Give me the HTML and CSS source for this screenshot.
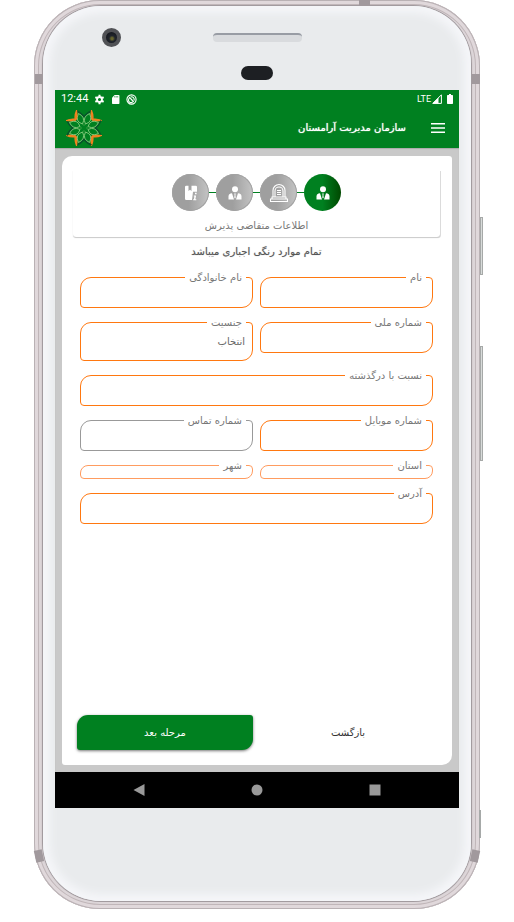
FILE: index.html
```html
<!DOCTYPE html>
<html lang="fa" dir="rtl">
<head>
<meta charset="utf-8">
<meta name="viewport" content="width=device-width, initial-scale=1">
<title>سازمان مدیریت آرامستان</title>
<link rel="stylesheet" href="styles.css">
</head>
<body>
<svg class="defs" aria-hidden="true">
  <symbol id="person" viewBox="0 0 16 16">
    <circle cx="8" cy="4.300" r="3"/>
    <path d="M1.500 14.500V11q0-2 2-2.500l1.500-.3L7 14.500zM14.500 14.500V11q0-2-2-2.500l-1.500-.3L9 14.500z"/>
    <path d="M7.200 8.500h1.600l-.4 1.500.3 2.500-.7 1-.7-1 .3-2.500z"/>
  </symbol>
  <symbol id="tomb" viewBox="0 0 20 20">
    <path d="M4 14V7.500a6 6 0 0 1 12 0V14M6 14V8a4 4 0 0 1 8 0v6M3 14h14v2H3zM1.500 16h17v2.500h-17zM8 7.500h4M8 9.500h4M8 11.500h4" fill="none" stroke="currentColor" stroke-width="1.100"/>
  </symbol>
  <symbol id="book" viewBox="0 0 16 16">
    <path d="M2 2q0-1.200 1.200-1.200H5.500v5.200L7 4.800 8.500 6V.8h4.300Q14 .8 14 2v4.800H10L9 15H3.200Q2 15 2 13.800z"/>
    <path d="M12 7.800h1.600v1.400H12zM10.800 10.500h2.300l-.7 3.700h.9v1H10.200v-1h.7l.5-2.700h-.6z"/>
  </symbol>
</svg>
<div class="phone">
  <span class="side-key power"></span>
  <span class="side-key volume"></span>
  <span class="side-key lower"></span>
  <span class="band band-top"></span>
  <span class="band band-tl"></span>
  <span class="band band-tr"></span>
  <span class="band band-bl"></span>
  <span class="band band-br"></span>
  <div class="face">
    <div class="hardware">
      <span class="camera"></span>
      <span class="speaker"></span>
      <span class="sensor"></span>
    </div>
    <div class="screen">
      <div class="status" dir="ltr">
        <span class="clock">12:44</span>
        <svg class="st-icon" viewBox="0 0 12 12"><g fill="none" stroke="#fff"><circle cx="6" cy="6" r="2.700" stroke-width="2"/><path d="M6 .8v2M6 9.200v2M1.500 3.400l1.700 1M8.800 7.600l1.700 1M1.500 8.600l1.700-1M8.800 4.400l1.700-1" stroke-width="2.200"/></g></svg>
        <svg class="st-icon" viewBox="0 0 12 12"><path d="M5 1h4.500q.8 0 .8.800v8.400q0 .8-.8.800H3q-.8 0-.8-.8V4z" fill="#fff"/><path d="M5.200 2.200v1.600M6.800 2.200v1.600M8.400 2.200v1.600" stroke="#008020" stroke-width=".7"/></svg>
        <svg class="st-icon" viewBox="0 0 12 12" fill="none" stroke="#fff"><circle cx="6" cy="6" r="5" stroke-width="1.200"/><path d="M3.500 3.500l5 5M4.200 4.200a2.800 2.800 0 1 0 3.800 3.800M5 3.300a2.800 2.800 0 0 1 3.700 3.700M5.500 6.800l1-1.500" stroke-width="1.200"/></svg>
        <span class="network">LTE</span>
        <svg class="signal" viewBox="0 0 10 10"><path d="M9.400.8v8.600H.8z" fill="none" stroke="#fff"/><path d="M6.500 3.500V9.500H.5z" fill="#fff"/></svg>
        <svg class="battery" viewBox="0 0 6 10"><path d="M2 0h2v1h1.300q.7 0 .7.700v7.600q0 .7-.7.700H.7Q0 10 0 9.300V1.700Q0 1 .7 1H2z" fill="#fff"/></svg>
      </div>
      <header class="appbar">
        <button class="menu" type="button" aria-label="منو"><svg viewBox="0 0 14 12"><path d="M0 1.800h14M0 6h14M0 10.200h14" stroke="#fff" stroke-width="1.600"/></svg></button>
        <h1>سازمان مدیریت آرامستان</h1>
        <svg class="logo" viewBox="-18 -18 36 36" fill="none">
          <g id="quarter">
            <path d="M-7.500-17Q-2-14.500 0-11 2-14.500 7.500-17" stroke="#07542a" stroke-width="1.600"/>
            <path d="M7.500-17.500Q9.500-13 8.800-8.800 13-9.500 17.500-7.500L13-7 9-7.500 7.500-9 7-13z" fill="#f58220" stroke="#f58220" stroke-width="1.200"/>
            <path d="M1.500-4Q-2-11 5.500-14.500 9.500-6.500 1.500-4z" stroke="#7cc576"/>
            <path d="M-1.500-4Q2-11-5.500-14.500-9.500-6.500-1.500-4z" stroke="#7cc576"/>
            <path d="M-1.500-4L0-2.500 1.500-4" stroke="#4aa44c" stroke-width=".8"/>
          </g>
          <use href="#quarter" transform="rotate(90)"/>
          <use href="#quarter" transform="rotate(180)"/>
          <use href="#quarter" transform="rotate(270)"/>
        </svg>
      </header>
      <main class="content">
        <form class="card">
          <section class="stepper">
            <ol class="steps">
              <li class="step active"><svg><use href="#person"/></svg></li>
              <li class="step"><svg class="wide"><use href="#tomb"/></svg></li>
              <li class="step"><svg><use href="#person"/></svg></li>
              <li class="step"><svg><use href="#book"/></svg></li>
            </ol>
            <p class="caption">اطلاعات متقاضی پذیرش</p>
          </section>
          <p class="notice">تمام موارد رنگی اجباری میباشد</p>
          <div class="fields">
            <div class="field"><label for="fname">نام</label><input id="fname" type="text"></div>
            <div class="field"><label for="lname">نام خانوادگی</label><input id="lname" type="text"></div>
            <div class="field"><label for="nid">شماره ملی</label><input id="nid" type="text"></div>
            <div class="field tall"><label for="gender">جنسیت</label><select id="gender"><option>انتخاب</option></select></div>
            <div class="field full"><label for="relation">نسبت با درگذشته</label><input id="relation" type="text"></div>
            <div class="field"><label for="mobile">شماره موبایل</label><input id="mobile" type="tel"></div>
            <div class="field optional"><label for="phone">شماره تماس</label><input id="phone" type="tel"></div>
            <div class="field flat"><label for="province">استان</label><select id="province"></select></div>
            <div class="field flat"><label for="city">شهر</label><select id="city"></select></div>
            <div class="field full"><label for="address">آدرس</label><input id="address" type="text"></div>
          </div>
          <div class="actions">
            <button class="back" type="button">بازگشت</button>
            <button class="next" type="submit">مرحله بعد</button>
          </div>
        </form>
      </main>
      <nav class="navbar" dir="ltr">
        <button type="button" aria-label="بازگشت"><svg viewBox="0 0 12 12"><path d="M11.500 0v12L.5 6z"/></svg></button>
        <button type="button" aria-label="خانه"><svg viewBox="0 0 12 12"><circle cx="6" cy="6" r="5.500"/></svg></button>
        <button type="button" aria-label="برنامه‌ها"><svg viewBox="0 0 12 12"><path d="M.5.5h11v11H.5z"/></svg></button>
      </nav>
    </div>
  </div>
</div>
</body>
</html>
```
FILE: styles.css
```css
* { box-sizing: border-box; }
body {
  margin: 0;
  padding: 0 34px 13px;
  background: #fff;
  font: 10px/16px "DejaVu Sans", sans-serif;
  color: #666;
}
button, input, select { font: inherit; color: inherit; }
button { border: 0; padding: 0; background: none; }
h1, p, ol { margin: 0; padding: 0; }
.defs { position: absolute; width: 0; height: 0; }

/* device shell */
.phone {
  position: relative;
  display: flex;
  min-height: calc(100vh - 13px);
  padding: 6px 9px 8px;
  border-radius: 66px;
  background: #d6ced1;
  box-shadow: inset 0 0 0 1px #b9b1b4, inset 0 0 0 4px #e0d8db, inset 0 0 0 5px #c0b6b9, inset 0 0 0 7px #dcd5d8;
}
.face {
  flex: 1;
  display: flex;
  flex-direction: column;
  min-width: 0;
  padding: 0 12px 93px;
  border-radius: 58px;
  background: #e9ebed;
  box-shadow: 0 0 0 1px #a29b9f, inset 0 0 8px 7px #f5f6f9;
}
.side-key {
  position: absolute;
  right: -3px;
  width: 3px;
  border: 1px solid #a6a9a8;
  background: #d8dbda;
}
.power { top: 217px; height: 58px; }
.volume { top: 346px; height: 115px; }
.lower { top: 810px; height: 28px; right: -1px; width: 2px; }
.band { position: absolute; background: #a1999d; width: 8px; height: 10px; }
.band-top { top: 0; left: 325px; width: 11px; height: 6px; }
.band-tl { top: 74px; left: 1px; }
.band-tr { top: 74px; right: 0; }
.band-bl { bottom: 47px; left: 1px; height: 12px; transform: rotate(-12deg); }
.band-br { bottom: 47px; right: 1px; height: 12px; transform: rotate(12deg); }
.hardware { position: relative; height: 84px; }
.camera {
  position: absolute;
  left: 47px;
  top: 22px;
  width: 19px;
  height: 19px;
  border: 4px solid #515256;
  border-radius: 50%;
  background: radial-gradient(circle at 55% 60%, #66642c 0 1px, #20242c 3px, #101216);
}
.speaker {
  position: absolute;
  left: calc(50% - 44px);
  top: 27px;
  width: 89px;
  height: 9px;
  border-radius: 4px;
  border-top: 2px solid #989ca4;
  background: #d9dbde;
}
.sensor {
  position: absolute;
  left: calc(50% - 16px);
  top: 60px;
  width: 32px;
  height: 14px;
  border-radius: 7px;
  background: #1d1f23;
}

/* screen */
.screen { flex: 1; display: flex; flex-direction: column; background: #c9c9c9; }
.status {
  display: flex;
  align-items: center;
  gap: 5px;
  height: 18px;
  padding: 0 6px;
  background: #008020;
  color: #fff;
  font-family: Roboto, sans-serif;
}
.st-icon { width: 11px; height: 11px; }
.clock { margin-right: 1px; font-size: 11px; }
.network { margin-left: auto; font-size: 9px; }
.signal { width: 10px; height: 10px; margin-left: -4px; }
.battery { width: 6px; height: 10px; }
.appbar {
  display: flex;
  align-items: center;
  height: 40px;
  padding: 0 14px 0 11px;
  background: #008020;
  color: #fff;
}
.menu { display: flex; margin-left: 25px; }
.menu svg { width: 14px; height: 12px; }
.appbar h1 { font-size: 10px; font-weight: 400; line-height: 16px; text-shadow: 0 0 1px #fff; }
.logo { width: 36px; height: 36px; margin-right: auto; }
.content { flex: 1; display: flex; padding: 8px 7px 7px; box-shadow: inset 0 1px 1px #aaa; }
.card {
  flex: 1;
  display: flex;
  flex-direction: column;
  min-width: 0;
  padding: 14px 12px 15px 11px;
  border-radius: 10px 3px 10px 3px;
  background: #fff;
}
.stepper {
  padding: 4px 0 3px;
  border-radius: 0 0 3px 3px;
  box-shadow: 0 1px 1px #ccc, 1px 1px 0 #ddd;
}
.steps { display: flex; justify-content: center; gap: 7px; list-style: none; }
.step {
  position: relative;
  display: flex;
  align-items: center;
  justify-content: center;
  width: 37px;
  height: 37px;
  border-radius: 50%;
  background: linear-gradient(90deg, #9f9f9f 45%, #c4c4c4);
  box-shadow: inset 0 0 0 1px #a2a2a2;
  color: #fff;
}
.step.active { background: linear-gradient(90deg, #008020 50%, #004800); box-shadow: none; }
.step + .step::before {
  content: "";
  position: absolute;
  left: 100%;
  top: 18px;
  width: 7px;
  height: 1px;
  background: #008020;
}
.step svg { width: 16px; height: 16px; fill: currentColor; }
.step svg.wide { width: 20px; height: 20px; }
.caption { margin-top: 7px; text-align: center; color: #777; }
.notice { margin: 7px 0 17px; text-align: center; color: #555; text-shadow: 0 0 1px #aaa; }
.fields {
  display: grid;
  grid-template-columns: 1fr 1fr;
  gap: 14px 7px;
  align-items: start;
  padding: 0 7px;
}
.field {
  position: relative;
  height: 31px;
  border: 1px solid #ff7810;
  border-radius: 11px 4px 11px 4px;
}
.field.full { grid-column: 1 / -1; }
.field.tall { height: 39px; }
.field.flat { height: 14px; border-color: #ff9c60; border-radius: 8px 4px 8px 4px; }
.field.optional { border-color: #999; }
.field label {
  position: absolute;
  right: 6px;
  top: -8px;
  padding: 0 4px;
  background: #fff;
  color: #777;
  white-space: nowrap;
}
.field input, .field select {
  display: block;
  width: 100%;
  height: 100%;
  padding: 0 7px;
  border: 0;
  outline: 0;
  background: none;
  appearance: none;
}
.actions { display: grid; grid-template-columns: 1fr 1fr; gap: 7px; margin-top: auto; padding: 0 4px; }
.actions button { height: 35px; color: #333; }
.actions .next {
  border-radius: 11px 3px 11px 3px;
  background: #008020;
  color: #fff;
  box-shadow: 0 1px 3px #777;
}
.navbar {
  display: flex;
  justify-content: space-around;
  align-items: center;
  height: 36px;
  padding: 0 25px;
  background: #000;
}
.navbar button { display: flex; }
.navbar svg { width: 12px; height: 12px; fill: #999; }
```
